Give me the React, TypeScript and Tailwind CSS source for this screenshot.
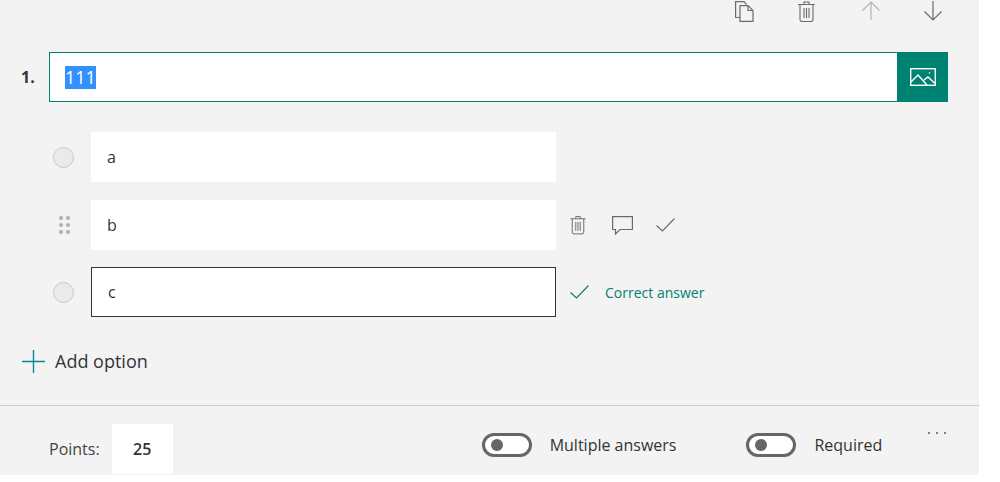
const font = { fontFamily: "" };

function TrashIcon({ className }: { className?: string }) {
  return (
    <svg viewBox="0 0 18 21" className={className} fill="none" stroke="currentColor" strokeWidth="1.1">
      <path d="M0.5 3.5H17.5M6.5 3.5V1H11.5V3.5M2.5 3.5V18.5Q2.5 20.5 4.5 20.5H13.5Q15.5 20.5 15.5 18.5V3.5" />
      <path d="M6.5 7V17M9 7V17M11.5 7V17" />
    </svg>
  );
}

function CopyIcon() {
  return (
    <svg viewBox="0 0 19 21" className="h-[21px] w-[19px] text-[#6b6b6b]" fill="none" stroke="currentColor" strokeWidth="1.2">
      <path d="M5 16.5H0.6V0.6H9L11.5 3.5" />
      <path d="M5 4.6H13L18 9.5V20.4H5Z" />
      <path d="M13 4.6V9.5H18" />
    </svg>
  );
}

function ArrowIcon({ down, className }: { down?: boolean; className?: string }) {
  return (
    <svg viewBox="0 0 18 20" className={className} fill="none" stroke="currentColor" strokeWidth="1.2">
      {down ? <path d="M9 0V19M0.5 10.5L9 19L17.5 10.5" /> : <path d="M9 19V1M0.5 9.5L9 1L17.5 9.5" />}
    </svg>
  );
}

function Check({ className }: { className?: string }) {
  return (
    <svg viewBox="0 0 19 14" className={className} fill="none" stroke="currentColor" strokeWidth="1.2">
      <path d="M0.5 7.5L6.5 13L18.5 0.5" />
    </svg>
  );
}

function Radio() {
  return <div className="h-[21px] w-[21px] rounded-full border border-[#c8c8c8] bg-[#eaeaea]" />;
}

function Toggle() {
  return (
    <div className="flex h-[24px] w-[50px] items-center rounded-full border-[3px] border-[#666666] bg-white pl-[6px]">
      <div className="h-[12px] w-[12px] rounded-full bg-[#666666]" />
    </div>
  );
}

function OptionBox({ text, selected }: { text: string; selected?: boolean }) {
  return (
    <div
      className={`flex h-[50px] w-[465px] items-center bg-white pl-[16px] text-[16px] text-[#333333] ${
        selected ? "border border-[#333333]" : ""
      }`}
    >
      {text}
    </div>
  );
}

export default function App() {
  return (
    <div className="h-[482px] w-[1000px] overflow-hidden bg-white font-['Open_Sans','Noto_Sans',sans-serif]">
      <div className="flex h-[475px] w-[979px] flex-col bg-[#f3f3f3]">
        {/* top actions */}
        <div className="flex h-[52px] items-start pl-[735px] pt-[1px]">
          <div className="w-[62px]">
            <CopyIcon />
          </div>
          <div className="w-[65px] text-[#6b6b6b]">
            <TrashIcon className="h-[21px] w-[19px]" />
          </div>
          <div className="w-[62px]">
            <ArrowIcon className="h-[20px] w-[18px] text-[#b4b4b4]" />
          </div>
          <ArrowIcon down className="h-[20px] w-[18px] text-[#6b6b6b]" />
        </div>

        {/* question */}
        <div className="flex h-[50px] items-center pl-[21px]">
          <div className="w-[28px] text-[16px] font-bold text-[#333333]">1.</div>
          <div className="flex h-full w-[849px] items-center border border-[#008272] bg-white pl-[15px]">
            <span className="bg-[#3390ff] text-[18px] leading-[23px] text-white">111</span>
          </div>
          <div className="flex h-full w-[50px] items-center justify-center bg-[#008272]">
            <svg viewBox="0 0 26 18" className="h-[18px] w-[26px]" fill="none" stroke="white" strokeWidth="1.4">
              <rect x="0.7" y="0.7" width="24.6" height="16.6" />
              <path d="M1 14L8 7L17 17M14 12L18 9L25 15.5" />
              <circle cx="19.5" cy="5" r="0.8" fill="white" stroke="none" />
            </svg>
          </div>
        </div>

        {/* options */}
        <div className="mt-[30px] flex flex-col">
          <div className="flex items-center">
            <div className="flex w-[91px] justify-end pr-[17px]">
              <Radio />
            </div>
            <OptionBox text="a" />
          </div>
          <div className="mt-[18px] flex items-center">
            <div className="flex w-[91px] justify-end pr-[21px]">
              <svg viewBox="0 0 11 18" className="h-[18px] w-[11px] text-[#b0b0b0]" fill="currentColor">
                <circle cx="2" cy="2" r="2" />
                <circle cx="9" cy="2" r="2" />
                <circle cx="2" cy="9" r="2" />
                <circle cx="9" cy="9" r="2" />
                <circle cx="2" cy="16" r="2" />
                <circle cx="9" cy="16" r="2" />
              </svg>
            </div>
            <OptionBox text="b" />
            <div className="ml-[14px] flex items-center">
              <TrashIcon className="h-[20px] w-[16px] text-[#6b6b6b]" />
              <svg viewBox="0 0 21 19" className="ml-[26px] h-[19px] w-[21px] text-[#6b6b6b]" fill="none" stroke="currentColor" strokeWidth="1.2">
                <path d="M0.6 0.6H20.4V13.5H8L3.5 18V13.5H0.6Z" />
              </svg>
              <Check className="ml-[23px] h-[14px] w-[19px] text-[#6b6b6b]" />
            </div>
          </div>
          <div className="mt-[17px] flex items-center">
            <div className="flex w-[91px] justify-end pr-[17px]">
              <Radio />
            </div>
            <OptionBox text="c" selected />
            <div className="ml-[14px] flex items-center">
              <Check className="h-[14px] w-[19px] text-[#107c6e]" />
              <span className="ml-[16px] text-[14px] text-[#008272]">Correct answer</span>
            </div>
          </div>
        </div>

        {/* add option */}
        <div className="mt-[31px] flex h-[26px] items-center pl-[22px]">
          <svg viewBox="0 0 23 23" className="h-[23px] w-[23px] text-[#008a9a]" fill="none" stroke="currentColor" strokeWidth="1.4">
            <path d="M11.5 0V23M0 11.5H23" />
          </svg>
          <span className="ml-[10px] text-[18px] text-[#333333]">Add option</span>
        </div>

        {/* footer */}
        <div className="mt-[31px] flex h-[70px] items-center border-t border-[#cccccc] pl-[49px] pt-[16px]">
          <span className="text-[16px] text-[#444444]">Points:</span>
          <div className="ml-[12px] flex h-[50px] w-[61px] items-center justify-center bg-white text-[16px] font-semibold text-[#333333]">
            25
          </div>
          <div className="ml-[309px] flex items-center self-start pt-[11px]">
            <Toggle />
            <span className="ml-[18px] text-[16px] text-[#333333]">Multiple answers</span>
          </div>
          <div className="ml-[70px] flex items-center self-start pt-[11px]">
            <Toggle />
            <span className="ml-[18px] text-[16px] text-[#333333]">Required</span>
          </div>
          <div className="ml-[46px] flex gap-[6px] self-start pt-[10px]">
            <div className="h-[2px] w-[2px] rounded-full bg-[#555555]" />
            <div className="h-[2px] w-[2px] rounded-full bg-[#555555]" />
            <div className="h-[2px] w-[2px] rounded-full bg-[#555555]" />
          </div>
        </div>
      </div>
    </div>
  );
}
